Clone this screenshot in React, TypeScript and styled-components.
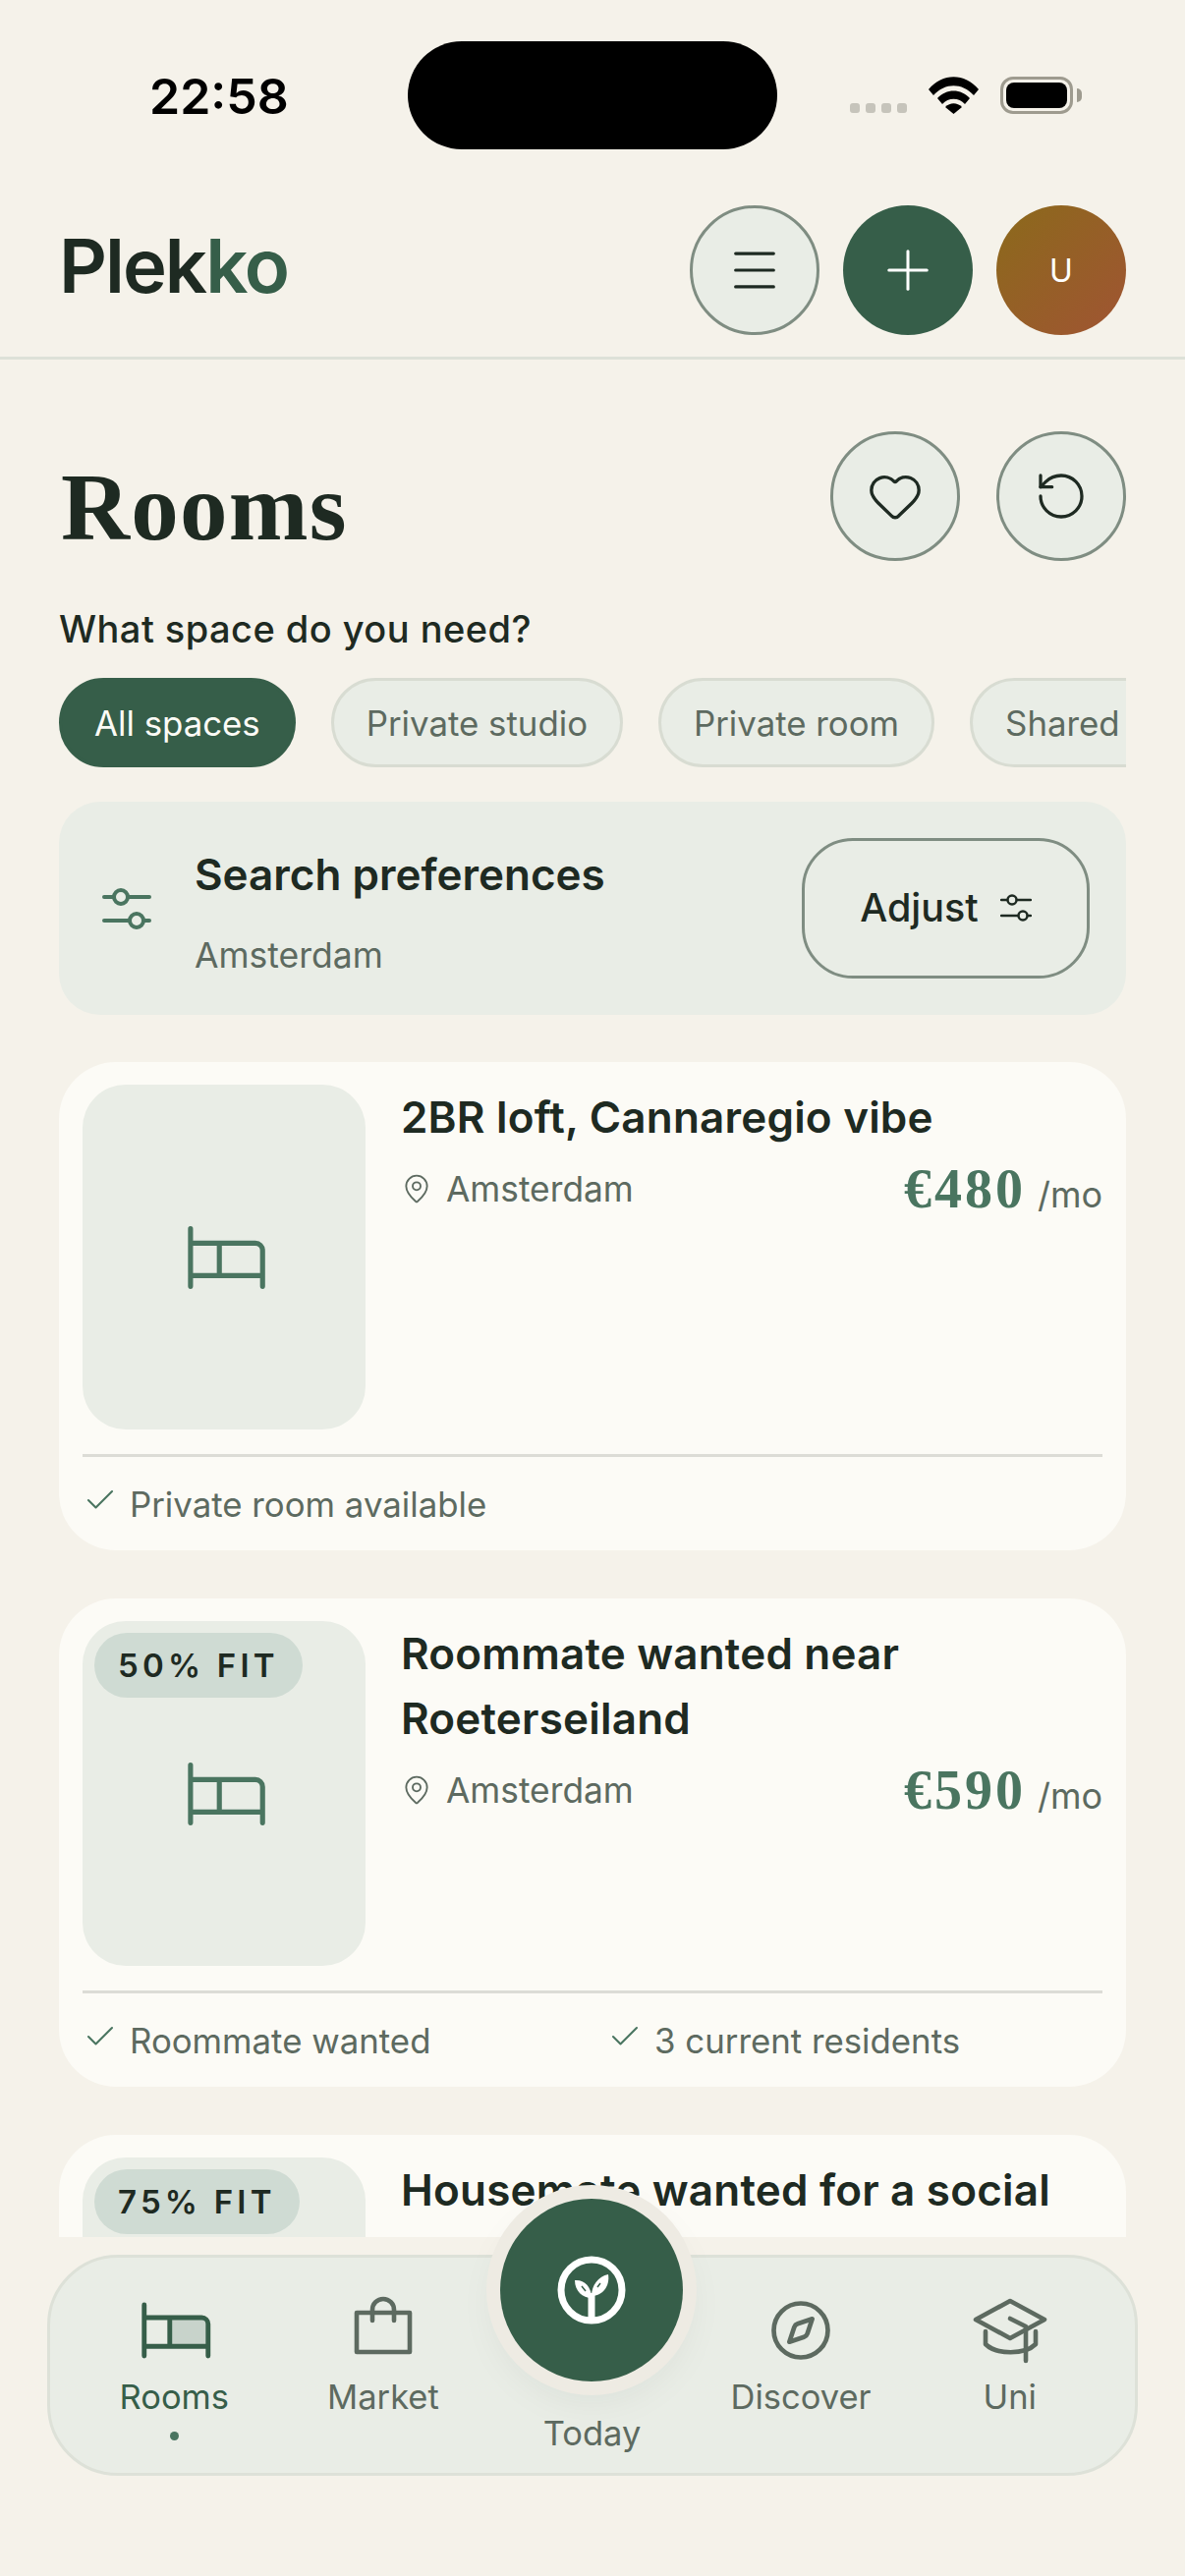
import React from 'react';
import styled, { createGlobalStyle } from 'styled-components';
import { Check, Compass, Heart, MapPin, Menu, Plus, RotateCcw } from 'lucide-react';

const GlobalStyle = createGlobalStyle`
  html, body {
    margin: 0;
    padding: 0;
    background: #f5f2ea;
  }
  * {
    box-sizing: border-box;
  }
`;

const sans = `Inter, "Noto Sans", sans-serif`;
const serif = `"Liberation Serif", serif`;

const Page = styled.div`
  width: 1206px;
  height: 2622px;
  display: flex;
  flex-direction: column;
  overflow: hidden;
  background: #f5f2ea;
  color: #1e2a22;
  font-family: ${sans};
`;

const StatusBar = styled.div`
  height: 182px;
  flex: none;
  display: grid;
  grid-template-columns: 415px 376px 415px;
`;

const Time = styled.div`
  padding: 68px 0 0 152px;
  font-size: 50px;
  line-height: 60px;
  font-weight: 600;
  color: #000;
`;

const Island = styled.div`
  margin-top: 42px;
  height: 110px;
  border-radius: 55px;
  background: #000;
`;

const StatusIcons = styled.div`
  display: flex;
  align-items: flex-end;
  gap: 22px;
  height: 116px;
  padding-left: 74px;
`;

const SignalDots = styled.div`
  display: flex;
  gap: 6px;
  padding-bottom: 1px;
`;

const SignalDot = styled.span`
  width: 10px;
  height: 10px;
  border-radius: 3px;
  background: #c6c4bb;
`;

const Battery = styled.div`
  position: relative;
  width: 74px;
  height: 38px;
  padding: 3px;
  border: 3px solid #9e9b8f;
  border-radius: 13px;
  &::before {
    content: '';
    display: block;
    height: 100%;
    border-radius: 8px;
    background: #000;
  }
  &::after {
    content: '';
    position: absolute;
    right: -12px;
    top: 9px;
    width: 5px;
    height: 14px;
    border-radius: 0 5px 5px 0;
    background: #9e9b8f;
  }
`;

const Header = styled.header`
  height: 184px;
  flex: none;
  display: flex;
  align-items: center;
  justify-content: space-between;
  padding: 5px 60px 0;
  border-bottom: 3px solid #dde1d8;
`;

const Logo = styled.div`
  padding-bottom: 11px;
  font-size: 76px;
  font-weight: 600;
  letter-spacing: -2px;
  color: #1e2a22;
  span {
    color: #365e49;
  }
`;

const ButtonRow = styled.div<{ $gap: number }>`
  display: flex;
  gap: ${p => p.$gap}px;
`;

const RoundButton = styled.button<{ $tone?: 'outline' | 'solid' | 'avatar' }>`
  width: 132px;
  height: 132px;
  padding: 0;
  display: flex;
  align-items: center;
  justify-content: center;
  border-radius: 50%;
  font-family: ${sans};
  font-size: 32px;
  color: ${p => (p.$tone === 'outline' || !p.$tone ? '#1e2a22' : '#fff')};
  border: ${p => (p.$tone === 'outline' || !p.$tone ? '3px solid #7f8d82' : 'none')};
  background: ${p =>
    p.$tone === 'solid'
      ? '#365e49'
      : p.$tone === 'avatar'
        ? 'linear-gradient(135deg, #8b6a1b, #a05433)'
        : '#e9ede6'};
`;

const Content = styled.main`
  height: 1911px;
  flex: none;
  overflow: hidden;
  padding: 73px 60px 0;
`;

const TitleRow = styled.div`
  display: flex;
  align-items: center;
  justify-content: space-between;
`;

const Title = styled.h1`
  margin: 0;
  padding: 24px 0 0 2px;
  font-family: ${serif};
  font-size: 97px;
  line-height: 108px;
  font-weight: 700;
  letter-spacing: 1.2px;
  color: #1e2a22;
`;

const Question = styled.div`
  margin-top: 45px;
  font-size: 38px;
  line-height: 48px;
  font-weight: 500;
  letter-spacing: 0.45px;
`;

const Chips = styled.div`
  display: flex;
  gap: 36px;
  margin-top: 26px;
  overflow: hidden;
`;

const Chip = styled.div<{ $active?: boolean }>`
  flex: none;
  height: 91px;
  padding: 0 33px;
  display: flex;
  align-items: center;
  border-radius: 46px;
  font-size: 34.800px;
  white-space: nowrap;
  color: ${p => (p.$active ? '#fcfbf6' : '#5d6a60')};
  background: ${p => (p.$active ? '#365e49' : '#e9ede6')};
  border: 3px solid ${p => (p.$active ? '#365e49' : '#d8dcd2')};
`;

const SearchCard = styled.section`
  margin-top: 35px;
  height: 217px;
  display: flex;
  align-items: center;
  padding: 0 37px 0 44px;
  border-radius: 42px;
  background: #e9ede6;
`;

const SearchText = styled.div`
  margin: 10px 0 0 44px;
  flex: 1;
`;

const SearchTitle = styled.div`
  font-size: 44px;
  line-height: 50px;
  font-weight: 600;
`;

const SearchSub = styled.div`
  margin-top: 36px;
  font-size: 35.500px;
  line-height: 44px;
  color: #5d6a60;
`;

const AdjustButton = styled.button`
  width: 293px;
  height: 143px;
  padding: 0 0 2px;
  display: flex;
  align-items: center;
  justify-content: center;
  gap: 22px;
  border: 3px solid #7f8d82;
  border-radius: 52px;
  background: transparent;
  font-family: ${sans};
  font-size: 39.500px;
  font-weight: 500;
  color: #1e2a22;
`;

const Card = styled.article<{ $first?: boolean }>`
  margin-top: ${p => (p.$first ? 48 : 49)}px;
  height: 497px;
  padding: 23px 24px 0;
  border-radius: 58px;
  background: #fcfbf6;
`;

const CardTop = styled.div`
  display: flex;
  gap: 36px;
  height: 351px;
`;

const Thumb = styled.div`
  position: relative;
  width: 288px;
  flex: none;
  display: flex;
  align-items: center;
  justify-content: center;
  border-radius: 44px;
  background: #e9ede6;
  color: #4a7560;
`;

const FitBadge = styled.div`
  position: absolute;
  top: 12px;
  left: 12px;
  height: 66px;
  padding: 0 24px;
  display: flex;
  align-items: center;
  border-radius: 33px;
  background: #cfdbd3;
  color: #1e2a22;
  font-size: 33px;
  font-weight: 600;
  letter-spacing: 4.200px;
  white-space: nowrap;
`;

const CardBody = styled.div`
  flex: 1;
  min-width: 0;
`;

const CardTitle = styled.h2`
  margin: 0;
  font-size: 44px;
  line-height: 66px;
  font-weight: 600;
  letter-spacing: 0.2px;
`;

const MetaRow = styled.div`
  display: flex;
  align-items: center;
  justify-content: space-between;
  margin-top: 8px;
  height: 64px;
`;

const Location = styled.div`
  display: flex;
  align-items: center;
  gap: 14px;
  font-size: 35.300px;
  color: #5d6a60;
`;

const Price = styled.div`
  display: flex;
  align-items: baseline;
  gap: 12px;
  font-family: ${serif};
  font-size: 56px;
  font-weight: 700;
  letter-spacing: 3px;
  color: #4a7560;
  small {
    font-family: ${sans};
    font-size: 36px;
    font-weight: 400;
    letter-spacing: 0;
    color: #5d6a60;
  }
`;

const CardFooter = styled.div`
  margin-top: 25px;
  padding-top: 18px;
  border-top: 3px solid #dcdcd6;
  display: grid;
  grid-template-columns: 1fr 1fr;
  column-gap: 30px;
`;

const FooterItem = styled.div`
  display: flex;
  align-items: center;
  gap: 12px;
  font-size: 34.800px;
  line-height: 60px;
  color: #5d6a60;
  svg {
    color: #4a7560;
    margin-top: -8px;
  }
`;

const NavArea = styled.div`
  flex: 1;
  padding: 18px 48px 0;
`;

const Nav = styled.nav`
  height: 225px;
  display: grid;
  grid-template-columns: repeat(5, 1fr);
  padding: 34px 21px 0 20px;
  border: 3px solid #dde1d8;
  border-radius: 72px;
  background: #e9ede6;
`;

const NavItem = styled.div<{ $active?: boolean }>`
  display: flex;
  flex-direction: column;
  align-items: center;
  font-size: 34.500px;
  color: ${p => (p.$active ? '#365e49' : '#5d6a60')};
`;

const NavIcon = styled.div`
  width: 80px;
  height: 80px;
  display: flex;
  align-items: center;
  justify-content: center;
`;

const NavLabel = styled.span`
  margin-top: 4px;
  line-height: 48px;
`;

const ActiveDot = styled.span`
  width: 9px;
  height: 9px;
  margin-top: 11px;
  border-radius: 50%;
  background: #4a7560;
`;

const Fab = styled.button`
  position: relative;
  z-index: 1;
  flex: none;
  width: 186px;
  height: 186px;
  margin-top: -94px;
  padding: 0;
  display: flex;
  align-items: center;
  justify-content: center;
  border: none;
  border-radius: 50%;
  background: #365e49;
  box-shadow: 0 0 0 14px #eeebe3, 0 14px 44px rgba(30, 42, 34, 0.08);
`;

const FabLabel = styled.span`
  margin-top: 29px;
  line-height: 48px;
`;

const WifiIcon = () => (
  <svg width="51" height="38" viewBox="0 0 51 38">
    <path d="M0 13C14-4 37-4 51 13l-5 6C34 6 17 6 5 19z" fill="#000" />
    <path d="M9 22c9-10 24-10 33 0l-5 6c-6-7-17-7-23 0z" fill="#000" />
    <path d="M17 31c5-5 12-5 17 0l-8.500 7z" fill="#000" />
  </svg>
);

const SliderIcon = ({ big }: { big?: boolean }) =>
  big ? (
    <svg width="50" height="46" viewBox="0 0 50 46" fill="none" stroke="#4a7560" strokeWidth="4" strokeLinecap="round">
      <path d="M2 11h10M26 11h22M2 35h26M42 35h6" />
      <circle cx="19" cy="11" r="7" />
      <circle cx="35" cy="35" r="7" />
    </svg>
  ) : (
    <svg width="32" height="28" viewBox="0 0 32 28" fill="none" stroke="#1e2a22" strokeWidth="2.500" strokeLinecap="round">
      <path d="M1 6h6M17 6h14M1 22h17M28 22h3" />
      <circle cx="12" cy="6" r="4.500" />
      <circle cx="23" cy="22" r="4.500" />
    </svg>
  );

const BedIcon = ({ size, active }: { size: number; active?: boolean }) => (
  <svg
    width={size}
    height={size}
    viewBox="-0.7 0 24 24"
    fill="none"
    stroke="currentColor"
    strokeWidth={active ? 1.5 : 1.4}
    strokeLinecap="round"
    strokeLinejoin="round"
  >
    {active && <path d="M10 8h10a2 2 0 0 1 2 2v7H10z" fill="#c8d3cb" stroke="none" />}
    <path d="M2 4v16M2 8h18a2 2 0 0 1 2 2v10M2 17h20M10 8v9" />
  </svg>
);

const BagIcon = () => (
  <svg width="80" height="80" viewBox="0 0 80 80" fill="none" stroke="#5d6a60" strokeWidth="4.600" strokeLinecap="round" strokeLinejoin="round">
    <path d="M13 22h54v40H13z" />
    <path d="M29 30v-11a11 11 0 0 1 22 0v11" />
  </svg>
);

const CapIcon = () => (
  <svg width="80" height="80" viewBox="0 0 80 80" fill="none" stroke="#5d6a60" strokeWidth="4.600" strokeLinecap="round" strokeLinejoin="round">
    <path d="M5 29 40 10l35 19-35 19z" />
    <path d="M15 41v13c11 11 40 11 51 0V41" />
    <path d="M40 28l16 8v35" />
  </svg>
);

const SproutIcon = () => (
  <svg width="70" height="70" viewBox="0 0 70 70" fill="none">
    <circle cx="35" cy="35" r="31" stroke="#fff" strokeWidth="7" />
    <path d="M35 43C26 43 18 36 18 25c9-1 17 6 17 18z" fill="#fff" />
    <path d="M35 41c0-11 7-20 17-22 2 12-6 22-17 22z" fill="#fff" />
    <path d="M35 38v30" stroke="#fff" strokeWidth="7" />
    <path d="M25 31l4 5M44 28l-3 4" stroke="#365e49" strokeWidth="1.500" />
  </svg>
);

const chips = ['All spaces', 'Private studio', 'Private room', 'Shared room'];

const listings = [
  { title: '2BR loft, Cannaregio vibe', price: '€480', notes: ['Private room available'] },
  { title: 'Roommate wanted near Roeterseiland', price: '€590', fit: '50% FIT', notes: ['Roommate wanted', '3 current residents'] },
  { title: 'Housemate wanted for a social', price: '€640', fit: '75% FIT', notes: [] as string[] },
];

const App: React.FC = () => {
  return (
    <Page>
      <GlobalStyle />
      <StatusBar>
        <Time>22:58</Time>
        <Island />
        <StatusIcons>
          <SignalDots>
            <SignalDot />
            <SignalDot />
            <SignalDot />
            <SignalDot />
          </SignalDots>
          <WifiIcon />
          <Battery />
        </StatusIcons>
      </StatusBar>

      <Header>
        <Logo>
          Plek<span>ko</span>
        </Logo>
        <ButtonRow $gap={24}>
          <RoundButton $tone="outline">
            <Menu size={58} strokeWidth={1.3} />
          </RoundButton>
          <RoundButton $tone="solid">
            <Plus size={66} strokeWidth={1.1} />
          </RoundButton>
          <RoundButton $tone="avatar">U</RoundButton>
        </ButtonRow>
      </Header>

      <Content>
        <TitleRow>
          <Title>Rooms</Title>
          <ButtonRow $gap={37}>
            <RoundButton>
              <Heart size={58} strokeWidth={1.4} />
            </RoundButton>
            <RoundButton>
              <RotateCcw size={56} strokeWidth={1.4} />
            </RoundButton>
          </ButtonRow>
        </TitleRow>

        <Question>What space do you need?</Question>
        <Chips>
          {chips.map((chip, i) => (
            <Chip key={chip} $active={i === 0}>
              {chip}
            </Chip>
          ))}
        </Chips>

        <SearchCard>
          <SliderIcon big />
          <SearchText>
            <SearchTitle>Search preferences</SearchTitle>
            <SearchSub>Amsterdam</SearchSub>
          </SearchText>
          <AdjustButton>
            Adjust
            <SliderIcon />
          </AdjustButton>
        </SearchCard>

        {listings.map((item, i) => (
          <Card key={item.title} $first={i === 0}>
            <CardTop>
              <Thumb>
                {item.fit && <FitBadge>{item.fit}</FitBadge>}
                <BedIcon size={88} />
              </Thumb>
              <CardBody>
                <CardTitle>{item.title}</CardTitle>
                <MetaRow>
                  <Location>
                    <MapPin size={32} strokeWidth={1.4} />
                    Amsterdam
                  </Location>
                  <Price>
                    {item.price}
                    <small>/mo</small>
                  </Price>
                </MetaRow>
              </CardBody>
            </CardTop>
            <CardFooter>
              {item.notes.map(note => (
                <FooterItem key={note}>
                  <Check size={36} strokeWidth={1.4} />
                  {note}
                </FooterItem>
              ))}
            </CardFooter>
          </Card>
        ))}
      </Content>

      <NavArea>
        <Nav>
          <NavItem $active>
            <NavIcon>
              <BedIcon size={78} active />
            </NavIcon>
            <NavLabel>Rooms</NavLabel>
            <ActiveDot />
          </NavItem>
          <NavItem>
            <NavIcon>
              <BagIcon />
            </NavIcon>
            <NavLabel>Market</NavLabel>
          </NavItem>
          <NavItem>
            <Fab>
              <SproutIcon />
            </Fab>
            <FabLabel>Today</FabLabel>
          </NavItem>
          <NavItem>
            <NavIcon>
              <Compass size={66} strokeWidth={1.7} />
            </NavIcon>
            <NavLabel>Discover</NavLabel>
          </NavItem>
          <NavItem>
            <NavIcon>
              <CapIcon />
            </NavIcon>
            <NavLabel>Uni</NavLabel>
          </NavItem>
        </Nav>
      </NavArea>
    </Page>
  );
};

export default App;
